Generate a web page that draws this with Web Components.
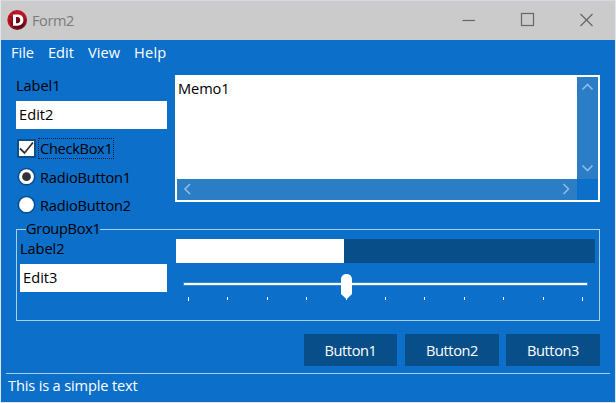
<!DOCTYPE html>
<html lang="en"><head><meta charset="utf-8"><title>Form2</title>
<style>
html,body{margin:0;height:100%;overflow:hidden}
body{background:#dfe5ee;font:14.6px/20px "Open Sans","Noto Sans",sans-serif;color:#000;
--blue:#0c6fc9;--dark:#084f8a;--line:#a9cff0;--bar:#2b7dc6}
</style></head><body>
<app-window></app-window>
<script>
const define=(name,html,setup)=>customElements.define(name,class extends HTMLElement{
  connectedCallback(){
    if(this.shadowRoot)return;
    const t=document.createElement('template');
    t.innerHTML=html;
    this.attachShadow({mode:'open'}).append(t.content.cloneNode(true));
    if(setup)setup(this,this.shadowRoot);
  }
});
// Label whose letter spacing is adjusted to the advance width in its "w" attribute.
define('ui-text','<style>:host{display:inline-block;white-space:pre;height:20px;line-height:20px;flex:none}span{display:inline-block}</style><span></span>',(el,r)=>{
  const s=r.querySelector('span'),w=+el.getAttribute('w');
  s.textContent=el.getAttribute('value');
  s.style.letterSpacing=((w-s.getBoundingClientRect().width)/s.textContent.length)+'px';
  el.style.width=w+'px';
});
define('title-bar',`<style>
:host{display:flex;height:39px;box-sizing:border-box;background:#cbcbcb;color:#7b7b7b;align-items:center;padding-left:6px}
ui-text{margin:-2px 0 0 4px}.controls{margin-left:auto}svg{display:block;flex:none}
</style>
<svg width="21" height="21" viewBox="0 0 21 21"><defs><radialGradient id="g" cx=".6" cy=".7"><stop stop-color="#44070d"/><stop offset=".65" stop-color="#86101b"/><stop offset="1" stop-color="#bd1526"/></radialGradient></defs><circle cx="10.2" cy="10" r="9.9" fill="url(#g)"/><path d="M3 6l8 11M2 10l6 8M6 2l10 14" stroke="#35070c" stroke-width="1" opacity=".55"/><path fill="#fff" fill-rule="evenodd" d="M6 4.5H10.5C14.4 4.5 16.4 6.7 16.4 10S14.2 15.7 10.4 15.7H6ZM9 7V13.2H10.3C12.3 13.2 13.2 12 13.2 10.1S12.3 7 10.4 7Z"/></svg>
<ui-text w="42" value="Form2"></ui-text>
<svg class="controls" width="154" height="39" viewBox="0 0 154 39" fill="none" stroke="#666" stroke-width="1.2"><path d="M1.5 19.5H14"/><rect x="60.5" y="12.5" width="12" height="12"/><path d="M119.5 13L131.5 25M131.5 13L119.5 25"/></svg>`);
define('menu-bar',`<style>:host{display:flex;height:35px;box-sizing:border-box;padding:2px 0 0 10px;color:#fff}ui-text+ui-text{margin-left:14px}</style>
<ui-text w="23" value="File"></ui-text><ui-text w="26" value="Edit"></ui-text><ui-text w="32" value="View"></ui-text><ui-text w="32.5" value="Help"></ui-text>`);
define('edit-box','<style>:host{display:block;box-sizing:border-box;height:28px;background:#fff;padding:3px 0 0 3px}</style><slot></slot>');
define('check-box',`<style>:host{display:flex;height:21px}svg{margin:1px 2px 0 0;flex:none}div{width:76px;height:21px;box-sizing:border-box;border:1px dotted #001c38;padding-left:1px}ui-text{display:block;margin-top:-1px}</style>
<svg width="19" height="19" viewBox="0 0 19 19"><rect width="19" height="19" fill="var(--dark)"/><rect x="2" y="2" width="15" height="15" fill="#fff"/><path d="M3 9.5L7.5 14L16 3.5" fill="none" stroke="#333" stroke-width="1.8"/></svg>
<div><ui-text w="72.5" value="CheckBox1"></ui-text></div>`);
define('radio-button',`<style>:host{display:flex;height:20px}svg{margin-right:4px;flex:none}:host(:not([checked])) .dot{display:none}</style>
<svg width="19" height="20" viewBox="0 0 19 20"><circle cx="9.5" cy="9.7" r="9" fill="var(--dark)"/><circle cx="9.5" cy="9.7" r="7.4" fill="#fff"/><circle class="dot" cx="9.5" cy="9.7" r="4.4" fill="#333"/></svg><slot></slot>`);
define('memo-box',`<style>:host{display:grid;box-sizing:border-box;width:425px;height:127px;border:2px solid #fff;grid-template:102px 21px/400px 21px}
.text{background:#fff;padding:1px 0 0 1px}.bar{background:var(--bar)}svg{display:block;fill:none;stroke:#8ebce5;stroke-width:1.6}</style>
<div class="text"><ui-text w="51.5" value="Memo1"></ui-text></div>
<div class="bar"><svg width="21" height="102"><path d="M5.5 12.5L10.5 7.5L15.5 12.5M5.5 88.5L10.5 93.5L15.5 88.5"/></svg></div>
<div class="bar"><svg width="400" height="21"><path d="M13 5L8 10L13 15M386.5 5L391.5 10L386.5 15"/></svg></div>`);
define('progress-bar','<style>:host{display:block;height:24px;background:var(--dark)}div{width:168px;height:24px;background:#fff}</style><div></div>');
define('track-bar','<style>:host{display:block}svg{display:block}</style><svg width="419" height="32" viewBox="0 0 419 32"><rect x="7" y="11" width="405" height="4" fill="#3288d5"/><rect x="8" y="12" width="403" height="2" fill="#fff"/><g id="t" fill="#fff"></g><path d="M165 8.5C165 1.2 176 1.2 176 8.5V23L171.4 27.5H169.8L165 23Z" fill="#fff"/></svg>',(el,r)=>{
  const g=r.getElementById('t');
  [12,51,91,130,170,209,248,288,327,367,406].forEach((x,i)=>{
    const t=document.createElementNS('http://www.w3.org/2000/svg','rect');
    t.setAttribute('x',x);t.setAttribute('y',26);t.setAttribute('width',1);t.setAttribute('height',i%10?3:4);g.append(t);
  });
});
define('group-box',`<style>:host{display:block}fieldset{box-sizing:border-box;width:584px;height:102px;margin:0;min-width:0;border:1px solid var(--line);padding:0 0 0 3px}
legend{padding:0;margin-left:6px;height:20px;width:74px}legend ui-text{display:block;margin-top:-1px}.row{display:flex;gap:9px}.left{width:147px}.left>ui-text{display:block;margin-top:-1px}edit-box{margin-top:6px}.right{width:419px}track-bar{margin-top:8px}</style>
<fieldset><legend><ui-text w="74.5" value="GroupBox1"></ui-text></legend><div class="row"><div class="left"><ui-text w="44.5" value="Label2"></ui-text><edit-box><ui-text w="34.5" value="Edit3"></ui-text></edit-box></div><div class="right"><progress-bar></progress-bar><track-bar></track-bar></div></div></fieldset>`);
define('push-button','<style>:host{display:flex;justify-content:center;height:32px;box-sizing:border-box;padding-top:6px;background:var(--dark);color:#fff}</style><slot></slot>');
define('status-bar','<style>:host{display:block;margin:7px 5px 0 5px;border-top:1px solid var(--line);color:#fff;padding:1px 0 0 2px}</style><slot></slot>');
define('app-window',`<style>
:host{display:block;margin:0 1px;padding-top:1px;width:614px;height:402px;box-sizing:border-box;background:linear-gradient(#d5d8e2 1px,var(--blue) 1px)}
.top{display:flex;gap:8px;padding-left:15px;height:144px}.fields{width:151px;display:flow-root}.fields>ui-text{display:block}
.fields edit-box{margin-top:6px}check-box{margin:9px 0 0 1px}radio-button{margin:8px 0 0 1px}
group-box{margin:0 0 0 15px}.buttons{display:grid;grid-template-columns:93px 94px 94px;column-gap:8px;margin:13px 0 0 303px}.buttons>:last-child{margin-left:-1px;width:94px}
</style><title-bar></title-bar><menu-bar></menu-bar>
<div class="top"><div class="fields"><ui-text w="44.5" value="Label1"></ui-text><edit-box><ui-text w="34.5" value="Edit2"></ui-text></edit-box><check-box></check-box>
<radio-button checked><ui-text w="91" value="RadioButton1"></ui-text></radio-button><radio-button><ui-text w="91" value="RadioButton2"></ui-text></radio-button></div><memo-box></memo-box></div>
<group-box></group-box>
<div class="buttons"><push-button><ui-text w="52" value="Button1"></ui-text></push-button><push-button><ui-text w="52" value="Button2"></ui-text></push-button><push-button><ui-text w="52" value="Button3"></ui-text></push-button></div>
<status-bar><ui-text w="129.5" value="This is a simple text"></ui-text></status-bar>`);
</script></body></html>
